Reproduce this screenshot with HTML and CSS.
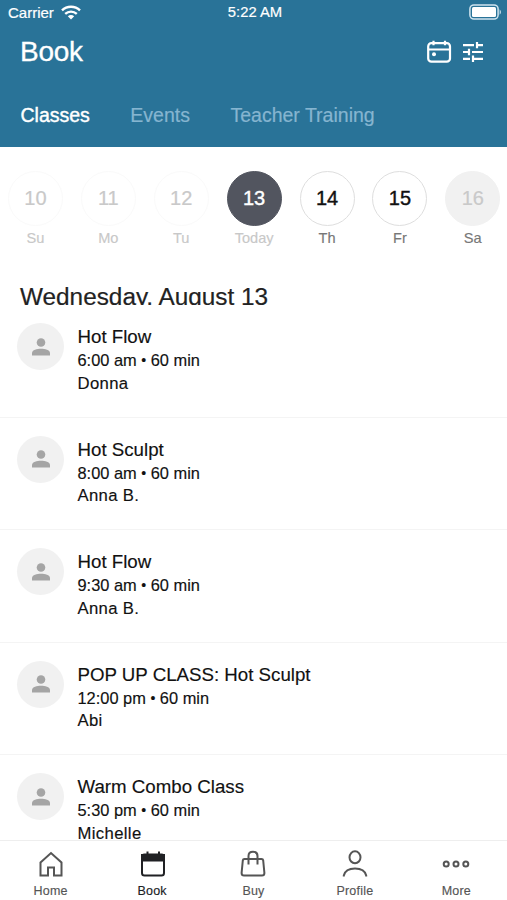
FILE: index.html
```html
<!DOCTYPE html>
<html lang="en">
<head>
<meta charset="utf-8">
<title>Book</title>
<link rel="stylesheet" href="styles.css">
</head>
<body>
<div class="app">
  <header class="header">
    <div class="status">
      <div class="carrier"><span class="carrier-name">Carrier</span>
        <svg width="20" height="15" viewBox="0 0 20 15"><g fill="none" stroke="#fff" stroke-width="2.4"><path d="M1 5.4C6 .5 14 .5 19 5.4"/><path d="M4.2 8.9C7.500 5.900 12.500 5.900 15.800 8.900"/></g><path d="M10 14.400L6.800 11.300Q10 8.600 13.200 11.300Z" fill="#fff"/></svg>
      </div>
      <span class="clock">5:22 AM</span>
      <svg class="battery" width="33" height="16" viewBox="0 0 33 16"><rect x=".9" y=".9" width="28.200" height="14.200" rx="4" fill="none" stroke="#cfe3ee" stroke-width="1.500"/><rect x="3" y="3" width="24" height="10" rx="1.500" fill="#fff"/><path d="M30.700 5.200Q33 8 30.700 10.800Z" fill="#e4f1f7"/></svg>
    </div>
    <div class="titlebar">
      <h1 class="title">Book</h1>
      <svg class="ic-cal" width="26" height="24" viewBox="0 0 26 24"><g fill="none" stroke="#fff" stroke-width="2.200"><rect x="2.200" y="3.200" width="21.800" height="18.500" rx="3.200"/><path d="M2 9.500H24M7.500 .8V5.300M19 .8V5.300"/></g><circle cx="8" cy="14.200" r="2" fill="#fff"/></svg>
      <svg class="ic-tune" width="20" height="20" viewBox="0 0 20 20"><path d="M0 3.200H11M14 3.200H20M14 0V6.300M0 10H6M6 6.800V13.200M9 10H20M0 16.800H7M10 16.800H20M10 13.500V20" fill="none" stroke="#fff" stroke-width="2.200"/></svg>
    </div>
    <nav class="tabs"><span class="tab tab-on">Classes</span><span class="tab">Events</span><span class="tab">Teacher Training</span></nav>
  </header>

  <section class="week">
    <div class="day past"><span class="num">10</span><span class="dow">Su</span></div>
    <div class="day past"><span class="num">11</span><span class="dow">Mo</span></div>
    <div class="day past"><span class="num">12</span><span class="dow">Tu</span></div>
    <div class="day today"><span class="num">13</span><span class="dow">Today</span></div>
    <div class="day"><span class="num">14</span><span class="dow">Th</span></div>
    <div class="day"><span class="num">15</span><span class="dow">Fr</span></div>
    <div class="day off"><span class="num">16</span><span class="dow">Sa</span></div>
  </section>

  <h2 class="date">Wednesday, August 13</h2>

  <svg width="0" height="0" class="defs"><symbol id="person" viewBox="0 0 18 18"><circle cx="9" cy="4.500" r="4.300"/><path d="M0 17.500V15C0 12 5 10.700 9 10.700S18 12 18 15V17.500Z"/></symbol></svg>

  <main class="list">
    <article class="row"><div class="avatar"><svg class="person"><use href="#person"/></svg></div><div class="info"><span class="name">Hot Flow</span><span class="time">6:00 am <span class="dot">•</span> 60 min</span><span class="teacher">Donna</span></div></article>
    <article class="row"><div class="avatar"><svg class="person"><use href="#person"/></svg></div><div class="info"><span class="name">Hot Sculpt</span><span class="time">8:00 am <span class="dot">•</span> 60 min</span><span class="teacher">Anna B.</span></div></article>
    <article class="row"><div class="avatar"><svg class="person"><use href="#person"/></svg></div><div class="info"><span class="name">Hot Flow</span><span class="time">9:30 am <span class="dot">•</span> 60 min</span><span class="teacher">Anna B.</span></div></article>
    <article class="row"><div class="avatar"><svg class="person"><use href="#person"/></svg></div><div class="info"><span class="name">POP UP CLASS: Hot Sculpt</span><span class="time">12:00 pm <span class="dot">•</span> 60 min</span><span class="teacher">Abi</span></div></article>
    <article class="row"><div class="avatar"><svg class="person"><use href="#person"/></svg></div><div class="info"><span class="name">Warm Combo Class</span><span class="time">5:30 pm <span class="dot">•</span> 60 min</span><span class="teacher">Michelle</span></div></article>
  </main>

  <nav class="bottom">
    <div class="item"><svg width="28" height="30" viewBox="0 0 28 30"><path d="M3.500 13.500L14 4L24.500 13.500V26.500H17V18.500H11V26.500H3.500Z"/></svg><span>Home</span></div>
    <div class="item on"><svg width="28" height="30" viewBox="0 0 28 30"><rect x="4" y="5.500" width="22" height="21" rx="2.500"/><path d="M4 6H26V11.500H4Z" fill="#202124"/><path d="M9.500 2.500V6M21 2.500V6"/></svg><span>Book</span></div>
    <div class="item"><svg width="28" height="30" viewBox="0 0 28 30"><path d="M5.500 10H22.500Q24 10 24.200 11.500L25.400 24Q25.400 26.500 23 26.500H5Q2.600 26.500 2.600 24L3.800 11.500Q4 10 5.500 10ZM9.500 15.500V7Q9.500 2.800 14 2.800T18.500 7V15.500"/></svg><span>Buy</span></div>
    <div class="item"><svg width="28" height="30" viewBox="0 0 28 30"><ellipse cx="14" cy="8.300" rx="5.500" ry="6"/><path d="M2.800 27.500V26.500C4 21.500 8.500 19.500 14 19.500S24 21.500 25.200 26.500V27.500"/></svg><span>Profile</span></div>
    <div class="item"><svg width="28" height="30" viewBox="0 0 28 30"><circle cx="4.200" cy="15" r="2.500"/><circle cx="14" cy="15" r="2.500"/><circle cx="23.800" cy="15" r="2.500"/></svg><span>More</span></div>
  </nav>
</div>
</body>
</html>
```

FILE: styles.css
```css
* { box-sizing: border-box; }
body { margin: 0; background: #fff; font-family: "Liberation Sans", Arial, sans-serif; color: #111; }
.app { width: 507px; height: 900px; display: flex; flex-direction: column; overflow: hidden; }
.header { height: 147px; flex: none; background: #297398; color: #fff; }
.status { height: 24px; display: grid; grid-template-columns: 1fr auto 1fr; align-items: center; padding: 0 5px 0 8px; font-size: 15px; -webkit-text-stroke: .2px; }
.carrier { display: flex; align-items: center; gap: 7px; }
.clock { font-size: 14.8px; }
.battery { justify-self: end; }
.titlebar { height: 55px; display: flex; align-items: center; padding: 0 24px 0 20px; }
.title { margin: 0; flex: 1; font-size: 28px; letter-spacing: -.3px; font-weight: 400; line-height: 54px; -webkit-text-stroke: .3px; }
.ic-cal { margin-right: 11px; }
.tabs { display: flex; gap: 40.500px; padding: 24px 0 0 20.500px; font-size: 19.500px; line-height: 25px; }
.tab { color: #86b5d0; white-space: nowrap; -webkit-text-stroke: .2px; }
.tab-on { color: #fff; -webkit-text-stroke: .4px #fff; }
.week { flex: none; height: 126px; display: grid; grid-template-columns: repeat(7, 72.900px); margin: 0 -1px; padding-top: 23.500px; }
.day { display: flex; flex-direction: column; align-items: center; }
.num { width: 55px; height: 55px; border-radius: 50%; border: 1px solid #dedede; font-size: 20px; line-height: 52px; text-align: center; color: #111; -webkit-text-stroke: .4px; }
.dow { font-size: 14.600px; line-height: 20px; margin-top: 2.400px; color: #777; -webkit-text-stroke: .15px; }
.past .num { border-color: #fafafa; color: #c9c9c9; -webkit-text-stroke: .2px; }
.past .dow, .today .dow { color: #c8c8c8; }
.today .num { background: #52555f; border-color: #52555f; color: #fff; }
.off .num { background: #f1f1f1; border-color: #f1f1f1; color: #c9c9c9; -webkit-text-stroke: .2px; }
.date { flex: none; margin: 9px 0 0; padding-left: 20px; height: 23px; overflow: hidden; font-size: 24.350px; font-weight: 400; line-height: 29px; color: #222; -webkit-text-stroke: .2px; }
.defs { display: none; }
.list { flex: 1; min-height: 0; overflow: hidden; }
.row { height: 112.5px; display: flex; gap: 13.500px; padding: 18px 0 0 17px; border-bottom: 1px solid #f4f4f4; }
.avatar { width: 47px; height: 47px; border-radius: 50%; background: #f1f1f1; display: grid; place-items: center; }
.person { width: 18px; height: 18px; fill: #a5a5a5; }
.info { display: flex; flex-direction: column; -webkit-text-stroke: .15px; }
.name { font-size: 18.700px; line-height: 24px; padding-top: 2px; }
.time { font-size: 16.400px; line-height: 23.500px; }
.dot { display: inline-block; font-size: 14px; line-height: 20px; vertical-align: 1px; }
.teacher { font-size: 16.700px; letter-spacing: .35px; line-height: 22px; }
.bottom { flex: none; height: 60px; display: grid; grid-template-columns: repeat(5, 1fr); border-top: 1px solid #eee; background: #fff; }
.item { display: flex; flex-direction: column; align-items: center; padding-top: 8px; font-size: 12.500px; letter-spacing: .2px; line-height: 16px; color: #555; -webkit-text-stroke: .15px; }
.item svg { fill: none; stroke: #555; stroke-width: 2; margin-bottom: 4px; }
.item.on { color: #202124; }
.item.on svg { stroke: #202124; }
```
